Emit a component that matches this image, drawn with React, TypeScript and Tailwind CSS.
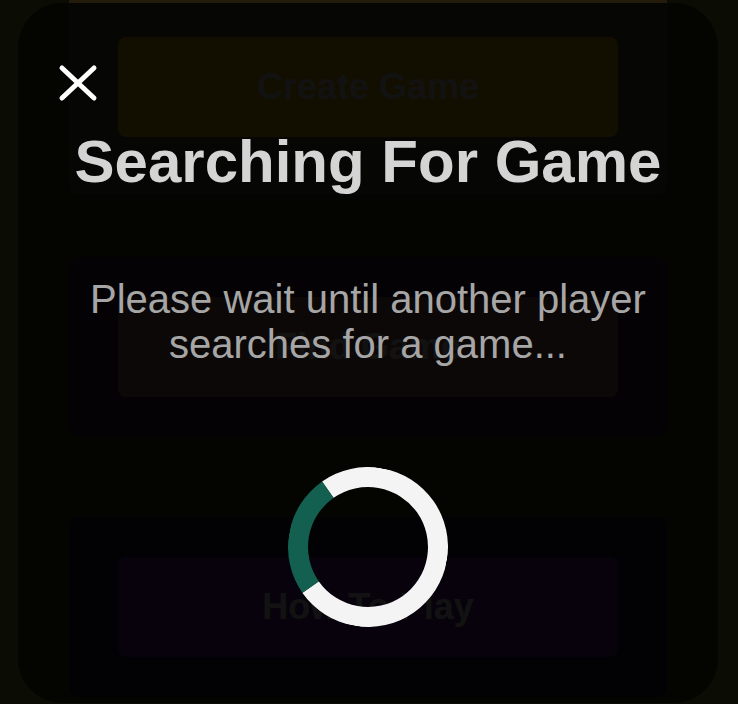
const App = () => {
  return (
    <div
      className="relative h-[704px] w-full overflow-hidden bg-[#3b3d0f]"
      style={{ fontFamily: '"Liberation Sans", Arial, sans-serif' }}
    >
      {/* menu underneath */}
      <div className="ml-[69px] flex w-[598px] flex-col">
        <div className="rounded-b-[10px] border-t-[3px] border-[#b08c37] bg-[#5c5444] px-[49px] pt-[34px] pb-[58px]">
          <button className="flex h-[100px] w-full items-center justify-center rounded-[8px] bg-[#ffc400] text-[36px] font-bold text-white">
            Create Game
          </button>
        </div>
        <div className="mt-[62px] rounded-[10px] bg-[#3c2c3c] px-[49px] py-[40px]">
          <button className="flex h-[100px] w-full items-center justify-center rounded-[8px] bg-[#b87676] text-[36px] font-bold text-white">
            Find Game
          </button>
        </div>
        <div className="mt-[80px] rounded-[10px] bg-[#281e3c] px-[49px] py-[40px]">
          <button className="flex h-[100px] w-full items-center justify-center rounded-[8px] bg-[#5f2895] text-[36px] font-bold text-white">
            How To Play
          </button>
        </div>
      </div>

      {/* backdrop */}
      <div className="absolute inset-0 bg-black/80" />

      {/* modal */}
      <div className="absolute left-[18px] top-[3px] flex h-[700px] w-[700px] flex-col items-center rounded-[44px] bg-black/[0.63]">
        <button className="absolute left-[40px] top-[60px] h-[40px] w-[40px]">
          <svg viewBox="0 0 40 40" width="40" height="40">
            <path d="M4 5 L36 35 M36 5 L4 35" stroke="#ffffff" strokeWidth="5" strokeLinecap="round" />
          </svg>
        </button>
        <h1 className="mt-[129px] text-[60px] font-bold leading-[60px] text-[#d4d4d4]">
          Searching For Game
        </h1>
        <p className="mt-[85px] px-[40px] text-center text-[40px] leading-[45px] text-[#a6a6a6]">
          Please wait until another player searches for a game...
        </p>
        <div className="mt-[100px] h-[160px] w-[160px] rotate-[10deg] rounded-full border-[20px] border-[#f4f4f4] border-l-[#135f50]" />
      </div>
    </div>
  );
};

export default App;
